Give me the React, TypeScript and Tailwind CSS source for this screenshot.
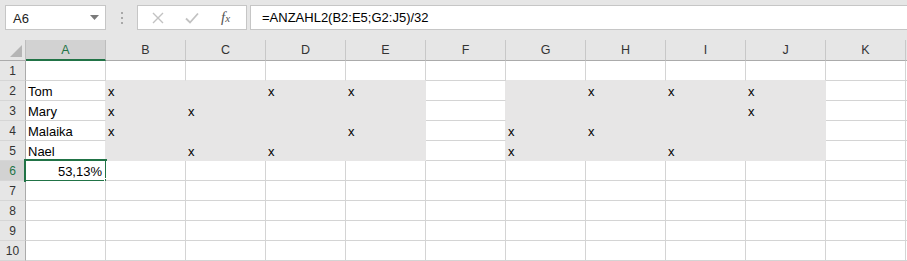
import React from 'react';

const COLS = ['A', 'B', 'C', 'D', 'E', 'F', 'G', 'H', 'I', 'J', 'K', ''];
const ROWS = [1, 2, 3, 4, 5, 6, 7, 8, 9, 10];

// cell values, keyed "C:R"
const values: Record<string, string> = {
  'A:2': 'Tom',
  'A:3': 'Mary',
  'A:4': 'Malaika',
  'A:5': 'Nael',
  'B:2': 'x', 'D:2': 'x', 'E:2': 'x', 'H:2': 'x', 'I:2': 'x', 'J:2': 'x',
  'B:3': 'x', 'C:3': 'x', 'J:3': 'x',
  'B:4': 'x', 'E:4': 'x', 'G:4': 'x', 'H:4': 'x',
  'C:5': 'x', 'D:5': 'x', 'G:5': 'x', 'I:5': 'x',
};

const isFilled = (col: number, row: number): boolean => {
  if (row < 2 || row > 5) return false;
  return (col >= 1 && col <= 4) || (col >= 6 && col <= 9);
};

const Cell: React.FC<{ col: number; row: number }> = ({ col, row }) => {
  const filled = isFilled(col, row);
  const right = filled || isFilled(col + 1, row);
  const bottom = filled || isFilled(col, row + 1);
  const key = `${COLS[col]}:${row}`;
  const active = col === 0 && row === 6;

  return (
    <div
      className={`relative h-[20px] border-r border-b pl-[2px] pr-[3px] pt-[2px] text-[13px] leading-[17px] text-black whitespace-nowrap ${
        filled ? 'bg-[#e7e6e6]' : 'bg-white'
      } ${right ? 'border-r-[#e7e6e6]' : 'border-r-[#d4d4d4]'} ${bottom ? 'border-b-[#e7e6e6]' : 'border-b-[#d4d4d4]'}`}
    >
      {active ? (
        <>
          <div className="text-right">53,13%</div>
          <div className="absolute top-[-2px] left-[-2px] w-[83px] h-[23px] border-2 border-[#217346]" />
          <div className="absolute left-[78px] top-[17px] w-[6px] h-[6px] bg-[#217346] border border-white" />
        </>
      ) : (
        values[key]
      )}
    </div>
  );
};

export default function App() {
  return (
    <div className="w-[907px] h-[261px] overflow-hidden bg-[#e6e6e6] font-['Liberation_Sans',Arial,sans-serif]">
      {/* Formula bar */}
      <div className="flex h-[40px] pt-[5px]">
        <div className="ml-[5px] w-[101px] h-[25px] bg-white border border-[#c6c6c6] flex items-center justify-between pl-[7px] pr-[6px]">
          <span className="text-[13px] text-[#222] leading-none pt-[1px]">A6</span>
          <svg width="9" height="5" viewBox="0 0 9 5">
            <path d="M0 0 L9 0 L4.5 5 Z" fill="#7a7a7a" />
          </svg>
        </div>
        <div className="w-[31px] h-[25px] flex flex-col items-center justify-center gap-[3px]">
          <div className="w-[2px] h-[2px] bg-[#a8a8a8]" />
          <div className="w-[2px] h-[2px] bg-[#a8a8a8]" />
          <div className="w-[2px] h-[2px] bg-[#a8a8a8]" />
        </div>
        <div className="w-[110px] h-[25px] bg-white border border-[#c6c6c6] flex items-center">
          <svg width="12" height="12" viewBox="0 0 12 12" className="ml-[14px]">
            <path d="M1 1 L11 11 M11 1 L1 11" stroke="#c2c2c2" strokeWidth="1.4" />
          </svg>
          <svg width="14" height="12" viewBox="0 0 14 12" className="ml-[21px]">
            <path d="M1 6.5 L5 10.5 L13 1.5" stroke="#c2c2c2" strokeWidth="1.8" fill="none" />
          </svg>
          <span className="ml-[22px] font-['Liberation_Serif',serif] italic text-[#555] text-[15px] leading-none">
            f<span className="text-[11px]">x</span>
          </span>
        </div>
        <div className="ml-[3px] flex-1 h-[25px] bg-white border border-r-0 border-[#c6c6c6] pl-[11px] text-[13px] leading-[23px] text-black">
          =ANZAHL2(B2:E5;G2:J5)/32
        </div>
      </div>

      {/* Grid */}
      <div className="grid grid-cols-[26px_repeat(11,80px)_80px]">
        {/* column headers */}
        <div className="relative h-[21px] border-r border-b border-r-[#bdbdbd] border-b-[#ababab] bg-[#e6e6e6]">
          <svg width="12" height="12" viewBox="0 0 12 12" className="absolute right-[3px] bottom-[3px]">
            <path d="M12 0 L12 12 L0 12 Z" fill="#b5b5b5" />
          </svg>
        </div>
        {COLS.map((c, i) =>
          i === 0 ? (
            <div
              key={i}
              className="h-[21px] border-r border-r-[#bdbdbd] border-b-2 border-b-[#217346] bg-[#d2d2d2] text-center text-[12.5px] leading-[20px] text-[#217346]"
            >
              {c}
            </div>
          ) : (
            <div
              key={i}
              className="h-[21px] border-r border-b border-r-[#c8c8c8] border-b-[#ababab] bg-[#e6e6e6] text-center text-[12.5px] leading-[20px] text-[#333]"
            >
              {c}
            </div>
          )
        )}

        {ROWS.map(r => (
          <React.Fragment key={r}>
            <div
              className={`h-[20px] border-r border-b border-r-[#ababab] border-b-[#d6d6d6] text-center text-[12px] leading-[19px] pt-[1px] ${
                r === 6 ? 'bg-[#d2d2d2] text-[#217346]' : 'bg-[#e6e6e6] text-[#333]'
              }`}
            >
              {r}
            </div>
            {COLS.map((c, i) => (
              <Cell key={i} col={i} row={r} />
            ))}
          </React.Fragment>
        ))}
      </div>
    </div>
  );
}
